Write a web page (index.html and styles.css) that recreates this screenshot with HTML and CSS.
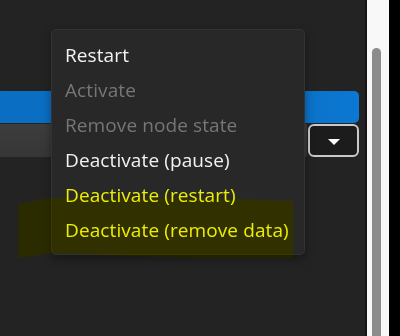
FILE: index.html
```html
<!DOCTYPE html>
<html lang="en">
<head>
    <meta charset="UTF-8">
    <meta name="viewport" content="width=device-width, initial-scale=1.0">
    <title>Node actions</title>
    <link rel="stylesheet" href="styles.css">
</head>
<body>
    <div class="window">
        <div class="main">
            <div class="primary-btn"></div>
            <div class="split-row">
                <div class="split-field"></div>
                <button class="split-toggle"><span class="caret"></span></button>
            </div>

            <ul class="menu">
                <li class="item">Restart</li>
                <li class="item disabled">Activate</li>
                <li class="item disabled">Remove node state</li>
                <li class="item">Deactivate (pause)</li>
                <li class="item marked">Deactivate (restart)</li>
                <li class="item marked">Deactivate (remove data)</li>
            </ul>

            <div class="highlight"></div>
        </div>
        <div class="divider"></div>
        <div class="scrollbar"><div class="thumb"></div></div>
        <div class="edge"></div>
    </div>
</body>
</html>
```

FILE: styles.css
```css
html, body { margin: 0; padding: 0; height: 100%; }
body { background: #000; font-family: "Open Sans", "Noto Sans", sans-serif; overflow: hidden; }

.window { display: grid; grid-template-columns: 1fr 2px 22px 11px; height: 336px; }

.main { position: relative; background: #232323; padding-top: 91px; }
.primary-btn { width: 359px; height: 32px; background: linear-gradient(90deg, #0a6fc3 0%, #0a70c5 80%, #0c78d3 100%); border-radius: 0 5px 5px 0; }
.split-row { display: flex; align-items: stretch; width: 359px; height: 33px; margin-top: 1px; }
.split-field { flex: 1; background: linear-gradient(180deg, #3d3d3d, #363636); }
.split-toggle { width: 51px; margin-left: 1px; background: #1c1c1c; border: 2px solid #c9c9c9; border-radius: 6px; display: flex; align-items: center; justify-content: center; padding: 0; }
.caret { width: 0; height: 0; border-left: 6px solid transparent; border-right: 6px solid transparent; border-top: 6px solid #fff; margin-top: 2px; }

.menu { position: absolute; left: 51px; top: 29px; width: 252px; margin: 0; padding: 8px 0 6px; list-style: none; background: #282828; border: 1px solid #333; border-radius: 5px; box-shadow: 0 4px 10px rgba(0,0,0,0.35); }
.item { height: 35px; line-height: 35px; padding-left: 13px; font-size: 19px; color: #f2f2f2; white-space: nowrap; letter-spacing: 0.1px; }
.item.disabled { color: #767676; }
.item.marked { color: #eeee00; }

/* marker stroke drawn over the last entry */
.highlight { position: absolute; left: 18px; top: 196px; width: 276px; height: 63px; background: #848400; mix-blend-mode: hard-light;
    clip-path: polygon(0 8px, 34px 2px, 180px 2px, 275px 5px, 275px 62px, 180px 62px, 34px 57px, 0 62px); }

.divider { background: #151515; }
.scrollbar { background: #f8f8f8; padding-top: 48px; display: flex; justify-content: center; }
.thumb { width: 9px; height: 100%; background: #8c8c8c; border-radius: 5px 5px 0 0; margin-left: -4px; }
.edge { background: #000; }
```
